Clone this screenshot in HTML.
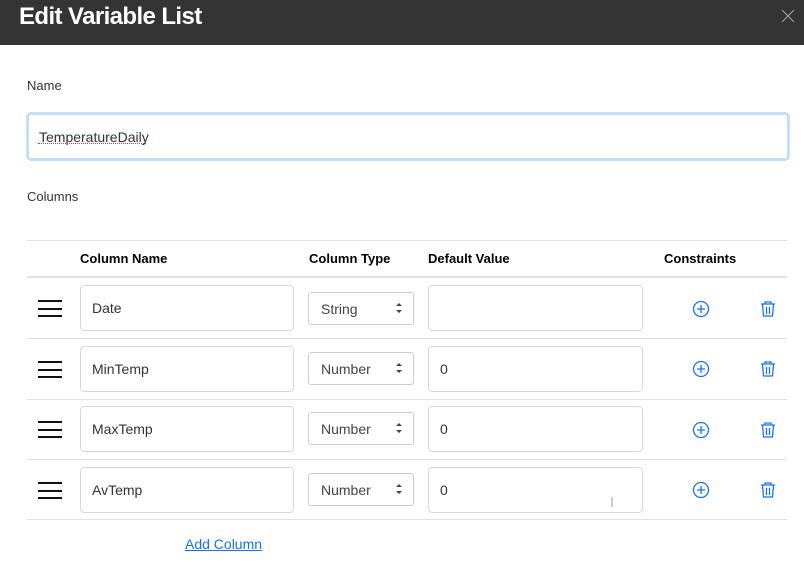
<!DOCTYPE html>
<html><head><style>
*{box-sizing:border-box;margin:0;padding:0}
body{width:804px;height:566px;background:#fff;font-family:"Liberation Sans",sans-serif;position:relative;overflow:hidden;color:#212529}
.a{position:absolute}
.hdr{left:0;top:0;width:804px;height:45px;background:#343434}
.title{left:19px;top:3px;color:#fff;font-size:24px;font-weight:bold;letter-spacing:-0.6px}
.lbl{font-size:13px;color:#333}
.inp{border:1px solid #d6d9dc;border-radius:4px;background:#fff;font-size:14px;color:#333;padding-left:11px;display:flex;align-items:center}
.sel{border:1px solid #ccc;border-radius:3px;font-size:14px;color:#444;padding-left:12px;display:flex;align-items:center}
.line{left:27px;width:760px;height:1px;background:#dee2e6}
.th{font-size:13px;font-weight:bold;color:#000;top:251px}
.ham{width:24px;height:17px;border-top:2px solid #111;border-bottom:2px solid #111}
.ham:after{content:"";position:absolute;left:0;top:5.5px;width:24px;height:2px;background:#111}
</style></head><body>
<div class="a hdr"></div>
<div class="a title">Edit Variable List</div>
<svg class="a" style="left:781px;top:9px" width="14" height="14"><path d="M1 1L13 13M13 1L1 13" stroke="#aaa" stroke-width="1"/></svg>
<div class="a lbl" style="left:27px;top:78px">Name</div>
<div class="a inp" style="left:26px;top:112px;width:764px;height:49px;border:3px solid #c5dcfb;border-radius:5px;padding-left:10px">TemperatureDaily</div>
<div class="a" style="left:38px;top:143px;width:108px;border-bottom:1px dotted #e33"></div>
<div class="a lbl" style="left:27px;top:189px">Columns</div>
<div class="a line" style="top:240px"></div>
<div class="a line" style="top:276px;height:2px"></div>
<div class="a th" style="left:80px">Column Name</div>
<div class="a th" style="left:309px">Column Type</div>
<div class="a th" style="left:428px">Default Value</div>
<div class="a th" style="left:664px">Constraints</div>

<div class="a line" style="top:338px"></div>
<div class="a line" style="top:399px"></div>
<div class="a line" style="top:459px"></div>
<div class="a line" style="top:519px"></div>

<div class="a ham" style="left:38px;top:300px"></div>
<div class="a inp" style="left:80px;top:285px;width:214px;height:46px">Date</div>
<div class="a sel" style="left:308px;top:292px;width:106px;height:33px">String</div>
<div class="a inp" style="left:428px;top:285px;width:215px;height:46px"></div>
<div class="a ham" style="left:38px;top:361px"></div>
<div class="a inp" style="left:80px;top:346px;width:214px;height:46px">MinTemp</div>
<div class="a sel" style="left:308px;top:352px;width:106px;height:33px">Number</div>
<div class="a inp" style="left:428px;top:346px;width:215px;height:46px">0</div>
<div class="a ham" style="left:38px;top:421px"></div>
<div class="a inp" style="left:80px;top:406px;width:214px;height:46px">MaxTemp</div>
<div class="a sel" style="left:308px;top:412px;width:106px;height:33px">Number</div>
<div class="a inp" style="left:428px;top:406px;width:215px;height:46px">0</div>
<div class="a ham" style="left:38px;top:482px"></div>
<div class="a inp" style="left:80px;top:467px;width:214px;height:46px">AvTemp</div>
<div class="a sel" style="left:308px;top:473px;width:106px;height:33px">Number</div>
<div class="a inp" style="left:428px;top:467px;width:215px;height:46px">0</div>

<svg class="a" style="left:0;top:0" width="804" height="566">
<g fill="#444"><path d="M396 306l3 -3 3 3z M396 310l3 3 3 -3z"/><path d="M396 366l3 -3 3 3z M396 370l3 3 3 -3z"/><path d="M396 426l3 -3 3 3z M396 430l3 3 3 -3z"/><path d="M396 487l3 -3 3 3z M396 491l3 3 3 -3z"/></g>
<g fill="none" stroke="#1a73e8" stroke-width="1.3">
<g id="p"><circle cx="701" cy="309" r="7.5"/><path d="M697 309h8M701 305v8"/></g>
<use href="#p" y="60"/><use href="#p" y="121"/><use href="#p" y="181"/>
<g id="t"><path d="M761 304h14M765 304v-2h6v2M762.5 304l1 12h9l1-12M766.5 307v7M769.5 307v7"/></g>
<use href="#t" y="60"/><use href="#t" y="121"/><use href="#t" y="181"/>
</g>
<path d="M612 497v10" stroke="#999" stroke-width="1"/>
</svg>
<div class="a" style="left:185px;top:536px;font-size:14px;color:#1a73e8;text-decoration:underline">Add Column</div>
</body></html>
